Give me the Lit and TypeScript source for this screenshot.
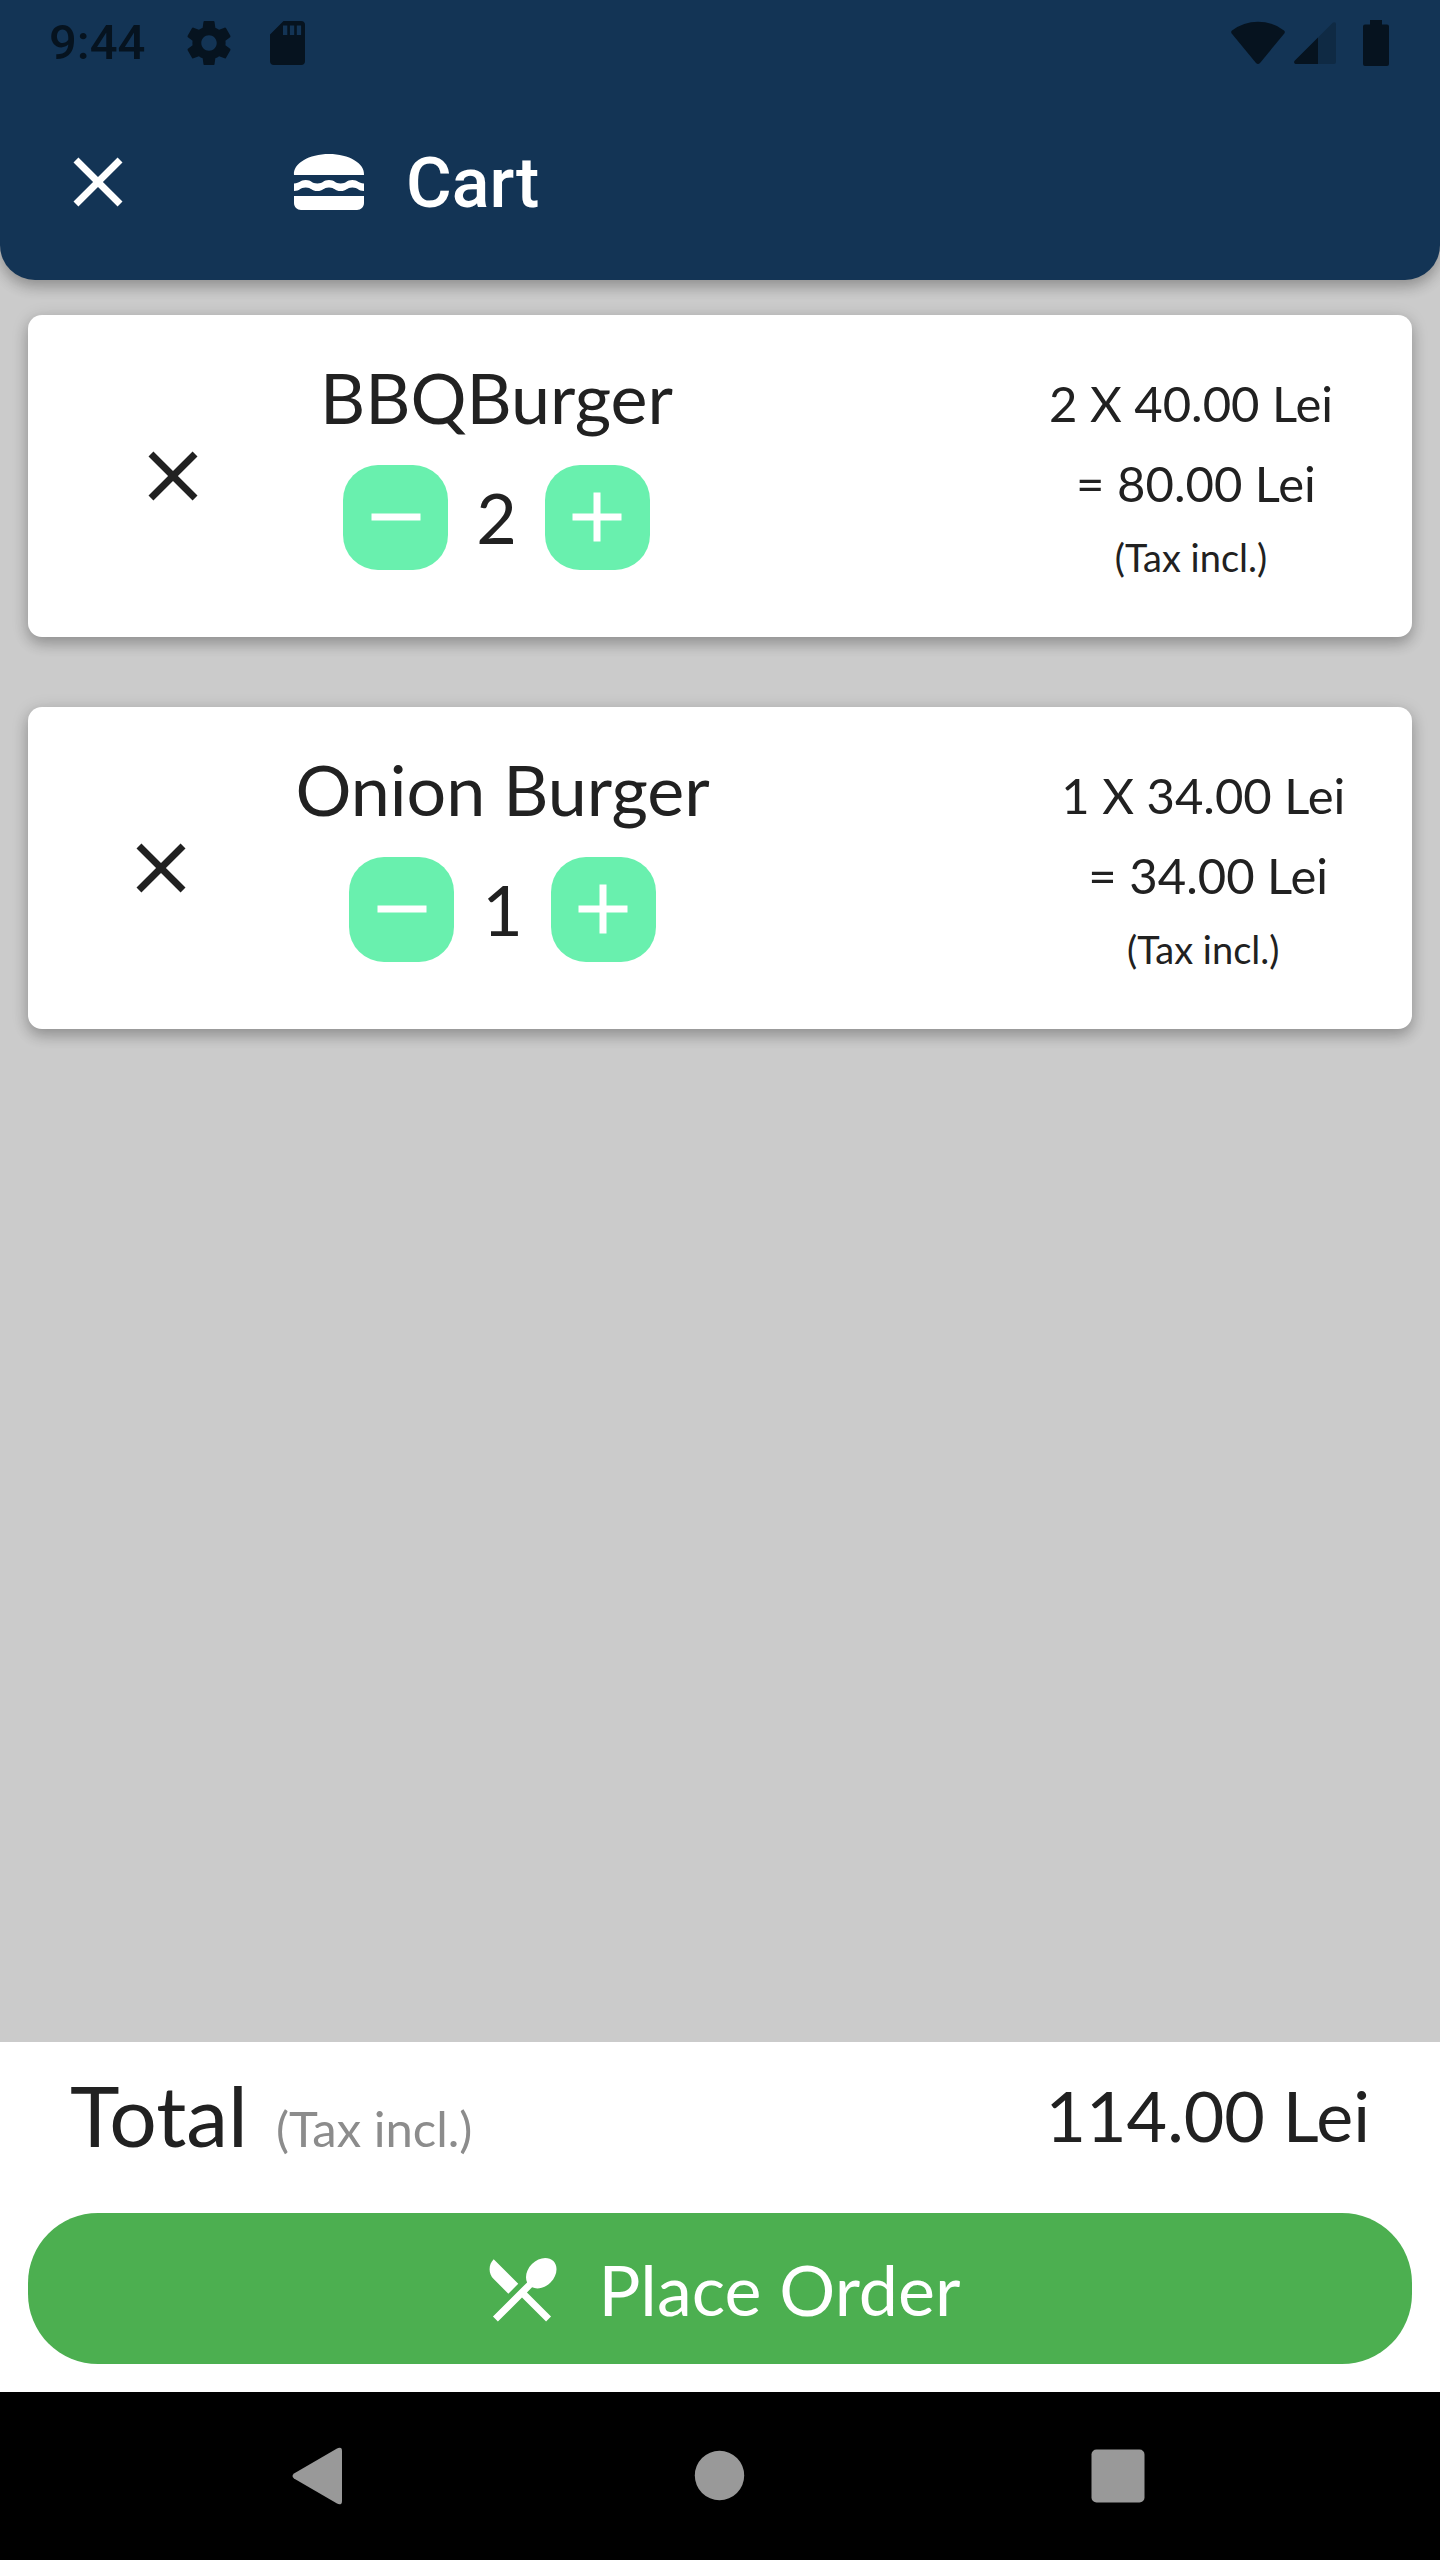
import { LitElement, html, css, svg } from "lit";
import { customElement, property, state } from "lit/decorators.js";

interface CartLine {
  id: number;
  name: string;
  price: number;
  quantity: number;
}

const CLOSE_PATH =
  "M19 6.41L17.59 5 12 10.59 6.41 5 5 6.41 10.59 12 5 17.59 6.41 19 12 13.41 17.59 19 19 17.59 13.41 12z";
const ADD_PATH = "M19 13h-6v6h-2v-6H5v-2h6V5h2v6h6v2z";
const REMOVE_PATH = "M19 13H5v-2h14v2z";
const BURGER_PATH =
  "M2 16h20v2c0 1.1-.9 2-2 2H4c-1.1 0-2-.9-2-2v-2zM2 12.400C3.700 12.400 3.700 11.430 5.350 11.430S7 12.430 8.680 12.430 10.330 11.430 12 11.430 13.670 12.430 15.330 12.430 17 11.430 18.670 11.430 20.300 12.400 22 12.400V14.550C20.300 14.550 20.300 13.550 18.670 13.550S17 14.570 15.330 14.570 13.670 13.550 12 13.550 10.330 14.570 8.680 14.570 7 13.550 5.350 13.550 3.700 14.550 2 14.550zM22 10c.32-3.28-4.28-6-9.99-6S1.68 6.72 2 10h20z";
const CUTLERY_PATH =
  "M8.1 13.34l2.83-2.83L3.91 3.5c-1.56 1.56-1.56 4.09 0 5.66l4.19 4.18zm6.78-1.81c1.53.71 3.68.21 5.27-1.38 1.91-1.91 2.28-4.65.81-6.12-1.46-1.46-4.2-1.1-6.12.81-1.59 1.59-2.09 3.74-1.38 5.27L3.7 19.87l1.41 1.41L12 14.41l6.88 6.88 1.41-1.41L13.41 13l1.47-1.47z";
const GEAR_PATH =
  "M19.43 12.98c.04-.32.07-.64.07-.98s-.03-.66-.07-.98l2.11-1.65c.19-.15.24-.42.12-.64l-2-3.46c-.12-.22-.39-.3-.61-.22l-2.49 1c-.52-.4-1.08-.73-1.69-.98l-.38-2.65C14.46 2.18 14.25 2 14 2h-4c-.25 0-.46.18-.49.42l-.38 2.65c-.61.25-1.17.59-1.69.98l-2.49-1c-.23-.09-.49 0-.61.22l-2 3.46c-.13.22-.07.49.12.64l2.11 1.65c-.04.32-.07.65-.07.98s.03.66.07.98l-2.11 1.65c-.19.15-.24.42-.12.64l2 3.46c.12.22.39.3.61.22l2.49-1c.52.4 1.08.73 1.69.98l.38 2.65c.03.24.24.42.49.42h4c.25 0 .46-.18.49-.42l.38-2.65c.61-.25 1.17-.59 1.69-.98l2.49 1c.23.09.49 0 .61-.22l2-3.46c.12-.22.07-.49-.12-.64l-2.11-1.65zM12 15.5c-1.93 0-3.5-1.57-3.5-3.5s1.57-3.5 3.5-3.5 3.5 1.57 3.5 3.5-1.57 3.5-3.5 3.5z";

const icon = (path: string) =>
  html`<svg width="84" height="84" viewBox="0 0 24 24" fill="currentColor" aria-hidden="true">
    ${svg`<path d=${path}></path>`}
  </svg>`;

const lei = (amount: number) => `${amount.toFixed(2)} Lei`;

const controls = css`
  button {
    margin: 0;
    padding: 0;
    border: 0;
    background: none;
    color: inherit;
    font: inherit;
    cursor: pointer;
  }
  svg {
    display: block;
    flex: none;
  }
`;

@customElement("status-bar")
export class StatusBar extends LitElement {
  static styles = [
    controls,
    css`
      :host {
        display: flex;
        justify-content: space-between;
        align-items: center;
        height: 82px;
        padding: 2px 51px 0 49px;
        color: #06131f;
        font: 500 49px/58px Roboto, sans-serif;
      }
      .group {
        display: flex;
        align-items: center;
      }
      .notices {
        gap: 38px;
      }
      .clock {
        margin-right: 3px;
      }
      .system {
        gap: 9px;
      }
      .battery {
        margin-left: 18px;
      }
    `,
  ];

  render() {
    return html`
      <div class="group notices">
        <time class="clock">9:44</time>
        <svg width="46" height="46" viewBox="1.6 1.6 20.8 20.8" fill="currentColor" aria-hidden="true">
          <path d=${GEAR_PATH}></path>
        </svg>
        <svg width="35" height="44" viewBox="0 0 35 44" fill="currentColor" fill-rule="evenodd" aria-hidden="true">
          <path
            d="M13.5 0H31a4 4 0 0 1 4 4v36a4 4 0 0 1-4 4H4a4 4 0 0 1-4-4V13.500zM13 4.500v9.500h4.300V4.500zM19.900 4.500v9.500h4.300V4.500zM26.800 4.500v9.500h4.300V4.500z"
          ></path>
        </svg>
      </div>
      <div class="group system">
        <svg width="54" height="44" viewBox="0 0 54 44" fill="currentColor" aria-hidden="true">
          <path d="M1 9.500Q12.500.7 27 .7T53 9.500Q54.500 10.800 53.300 12.400L29 42Q27 44 25 42L.7 12.400Q-.5 10.800 1 9.500z"></path>
        </svg>
        <svg width="42" height="42" viewBox="0 0 42 42" fill="currentColor" aria-hidden="true">
          <path
            opacity="0.3"
            d="M24 15.500L38.500 1Q40 -.4 41.400 .6Q42 1.200 42 2.500V40Q42 42 40 42H24z"
          ></path>
          <path d="M24 15.500V42H2Q.6 42 .2 40.700Q-.2 39.700 .9 38.600z"></path>
        </svg>
        <svg class="battery" width="26" height="46" viewBox="0 0 26 46" fill="currentColor" aria-hidden="true">
          <path d="M7 0H19V4.500H24Q26 4.500 26 6.500V44Q26 46 24 46H2Q0 46 0 44V6.500Q0 4.500 2 4.500H7z"></path>
        </svg>
      </div>
    `;
  }
}

@customElement("cart-item")
export class CartItem extends LitElement {
  @property({ attribute: false }) line!: CartLine;

  static styles = [
    controls,
    css`
      :host {
        display: flex;
        justify-content: space-evenly;
        align-items: center;
        min-height: 322px;
        border-radius: 14px;
        background: #fff;
        box-shadow: 0 7px 14px rgba(0, 0, 0, 0.2), 0 3px 18px rgba(0, 0, 0, 0.14);
      }
      .remove {
        display: grid;
        place-items: center;
        width: 168px;
        height: 168px;
      }
      .product {
        display: flex;
        flex-direction: column;
        align-items: center;
        gap: 26px;
        padding: 0 2px 28px;
      }
      .name {
        margin: 0;
        font-size: 70px;
        font-weight: 400;
        line-height: 84px;
      }
      .stepper {
        display: flex;
        align-items: center;
        gap: 28px;
        height: 105px;
        font-size: 70px;
        line-height: 86px;
      }
      .step {
        display: grid;
        place-items: center;
        width: 105px;
        height: 105px;
        border-radius: 35px;
        background: #69f0ae;
        color: #fff;
      }
      .spacer {
        width: 234px;
      }
      .price {
        display: flex;
        flex-direction: column;
        align-items: center;
        gap: 21px;
        padding: 2px 18px 0;
        font-size: 49px;
        line-height: 59px;
        white-space: nowrap;
      }
      .subtotal {
        padding-left: 10px;
      }
      .tax {
        font-size: 38px;
        line-height: 46px;
      }
    `,
  ];

  private change(delta: number) {
    this.dispatchEvent(new CustomEvent("quantity-change", { detail: delta }));
  }

  render() {
    const { name, price, quantity } = this.line;
    return html`
      <button class="remove" aria-label="Remove ${name}" @click=${() => this.change(-quantity)}>
        ${icon(CLOSE_PATH)}
      </button>
      <div class="product">
        <h2 class="name">${name}</h2>
        <div class="stepper">
          <button class="step" aria-label="Decrease quantity" @click=${() => this.change(-1)}>
            ${icon(REMOVE_PATH)}
          </button>
          <span>${quantity}</span>
          <button class="step" aria-label="Increase quantity" @click=${() => this.change(1)}>
            ${icon(ADD_PATH)}
          </button>
        </div>
      </div>
      <div class="spacer"></div>
      <div class="price">
        <span>${quantity} X ${lei(price)}</span>
        <span class="subtotal">= ${lei(price * quantity)}</span>
        <span class="tax">(Tax incl.)</span>
      </div>
    `;
  }
}

@customElement("app-root")
export class AppRoot extends LitElement {
  @state() private lines: CartLine[] = [
    { id: 1, name: "BBQBurger", price: 40, quantity: 2 },
    { id: 2, name: "Onion Burger", price: 34, quantity: 1 },
  ];

  static styles = [
    controls,
    css`
      :host {
        display: flex;
        flex-direction: column;
        min-height: 100vh;
        background: #cbcbcb;
        color: #212121;
        font-family: Lato, sans-serif;
      }
      .header {
        border-radius: 0 0 35px 35px;
        background: #133455;
        color: #fff;
        box-shadow: 0 7px 14px rgba(0, 0, 0, 0.2), 0 3px 18px rgba(0, 0, 0, 0.14);
      }
      .toolbar {
        display: flex;
        align-items: center;
        height: 196px;
      }
      .close {
        display: grid;
        place-items: center;
        width: 196px;
        height: 196px;
      }
      .title {
        display: flex;
        align-items: center;
        gap: 35px;
        margin: 0 0 0 91px;
        font: 500 70px/84px Roboto, sans-serif;
      }
      .title-text {
        padding-top: 2px;
      }
      .list {
        flex: 1;
        display: flex;
        flex-direction: column;
        gap: 70px;
        padding: 35px 28px;
      }
      .summary {
        display: flex;
        flex-direction: column;
        gap: 48px;
        padding: 22px 28px 28px;
        background: #fff;
      }
      .totals {
        display: flex;
        justify-content: space-between;
        align-items: center;
        padding: 0 42px;
      }
      .label {
        display: flex;
        align-items: baseline;
        gap: 28px;
        font-size: 84px;
        line-height: 101px;
      }
      .tax {
        color: #8c8c8c;
        font-size: 49px;
        line-height: 59px;
      }
      .amount {
        font-size: 70px;
        line-height: 84px;
      }
      .order {
        display: flex;
        justify-content: center;
        align-items: center;
        gap: 35px;
        height: 151px;
        border-radius: 70px;
        background: #4caf50;
        color: #fff;
        font-size: 70px;
        line-height: 86px;
      }
      .navigation {
        display: grid;
        grid-template-columns: repeat(3, 1fr);
        height: 168px;
        padding: 0 120px;
        background: #000;
        color: #999;
      }
      .key {
        display: grid;
        place-items: center;
      }
    `,
  ];

  private changeQuantity(id: number, delta: number) {
    this.lines = this.lines
      .map((line) => (line.id === id ? { ...line, quantity: line.quantity + delta } : line))
      .filter((line) => line.quantity > 0);
  }

  render() {
    const total = this.lines.reduce((sum, line) => sum + line.price * line.quantity, 0);
    return html`
      <header class="header">
        <status-bar></status-bar>
        <div class="toolbar">
          <button class="close" aria-label="Close">${icon(CLOSE_PATH)}</button>
          <h1 class="title">${icon(BURGER_PATH)}<span class="title-text">Cart</span></h1>
        </div>
      </header>
      <main class="list">
        ${this.lines.map(
          (line) => html`<cart-item
            .line=${line}
            @quantity-change=${(event: CustomEvent<number>) => this.changeQuantity(line.id, event.detail)}
          ></cart-item>`
        )}
      </main>
      <section class="summary">
        <div class="totals">
          <div class="label">Total<span class="tax">(Tax incl.)</span></div>
          <div class="amount">${lei(total)}</div>
        </div>
        <button class="order">${icon(CUTLERY_PATH)}<span>Place Order</span></button>
      </section>
      <nav class="navigation">
        <button class="key" aria-label="Back">
          <svg width="84" height="84" viewBox="0 0 84 84" fill="currentColor" aria-hidden="true">
            <path d="M16 39.500L59 14.500Q61 13.400 63 14Q64 14.600 64 17V67Q64 69.400 63 70Q61 70.600 59 69.500L16 44.500Q14.500 43.400 14.500 42T16 39.500z"></path>
          </svg>
        </button>
        <button class="key" aria-label="Home">
          <svg width="84" height="84" viewBox="0 0 84 84" fill="currentColor" aria-hidden="true">
            <circle cx="41.500" cy="41.500" r="24.700"></circle>
          </svg>
        </button>
        <button class="key" aria-label="Recent apps">
          <svg width="84" height="84" viewBox="0 0 84 84" fill="currentColor" aria-hidden="true">
            <rect x="13.500" y="15.500" width="53" height="53" rx="5"></rect>
          </svg>
        </button>
      </nav>
    `;
  }
}
